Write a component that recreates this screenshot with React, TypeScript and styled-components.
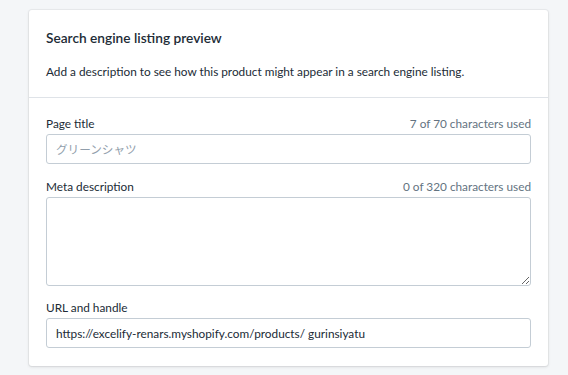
import styled, { createGlobalStyle } from 'styled-components';

const GlobalStyle = createGlobalStyle`
  html, body {
    margin: 0;
    padding: 0;
    background: #f4f6f8;
    font-family: Lato, 'Noto Sans CJK JP', sans-serif;
    color: #212b36;
  }
`;

const Page = styled.div`
  padding: 10px 20px 10px 29px;
  width: 568px;
  box-sizing: border-box;
`;

const Card = styled.div`
  width: 519px;
  background: #fff;
  border-radius: 3px;
  box-shadow: 0 0 0 1px rgba(63, 63, 68, 0.05), 0 1px 3px 0 rgba(63, 63, 68, 0.15);
`;

const Section = styled.div<{ $divided?: boolean }>`
  padding: ${(p) => (p.$divided ? '18px 17px 18px' : '18px 17px 15px')};
  border-top: ${(p) => (p.$divided ? '1px solid #dfe3e8' : 'none')};
  display: flex;
  flex-direction: column;
  gap: ${(p) => (p.$divided ? '14.5px' : '14px')};
`;

const Title = styled.h2`
  margin: 0;
  font-size: 13.7px;
  line-height: 20px;
  font-weight: 600;
`;

const Text = styled.p`
  margin: 0;
  font-size: 11.8px;
  line-height: 20px;
`;

const Field = styled.div`
  display: flex;
  flex-direction: column;
  gap: 2px;
`;

const LabelRow = styled.div`
  display: flex;
  justify-content: space-between;
  align-items: center;
  font-size: 11.8px;
  line-height: 16px;
`;

const Counter = styled.span`
  color: #637381;
`;

const Input = styled.input`
  box-sizing: border-box;
  width: 100%;
  height: 30px;
  padding: 0 9px;
  border: 1px solid #c4cdd5;
  border-radius: 3px;
  font: inherit;
  font-size: 11.8px;
  color: #212b36;
  outline: none;

  &::placeholder {
    color: #919eab;
    font-size: 11.6px;
  }
`;

const TextArea = styled.textarea`
  box-sizing: border-box;
  width: 100%;
  height: 89px;
  padding: 6px 9px;
  border: 1px solid #c4cdd5;
  border-radius: 3px;
  font: inherit;
  font-size: 11.8px;
  outline: none;
  display: block;
`;

export default function App() {
  return (
    <Page>
      <GlobalStyle />
      <Card>
        <Section>
          <Title>Search engine listing preview</Title>
          <Text>Add a description to see how this product might appear in a search engine listing.</Text>
        </Section>
        <Section $divided>
          <Field>
            <LabelRow>
              <span>Page title</span>
              <Counter>7 of 70 characters used</Counter>
            </LabelRow>
            <Input placeholder="グリーンシャツ" />
          </Field>
          <Field>
            <LabelRow>
              <span>Meta description</span>
              <Counter>0 of 320 characters used</Counter>
            </LabelRow>
            <TextArea />
          </Field>
          <Field>
            <LabelRow>
              <span>URL and handle</span>
            </LabelRow>
            <Input defaultValue="https://excelify-renars.myshopify.com/products/ gurinsiyatu" />
          </Field>
        </Section>
      </Card>
    </Page>
  );
}
